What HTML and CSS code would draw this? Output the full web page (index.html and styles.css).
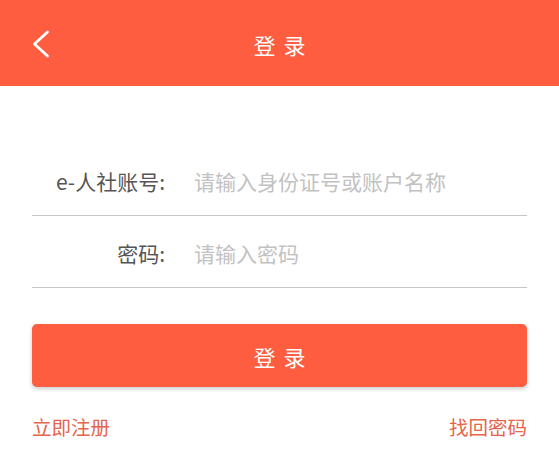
FILE: index.html
```html
<!DOCTYPE html>
<html lang="zh-CN">
<head>
<meta charset="utf-8">
<title>登录</title>
<link rel="stylesheet" href="styles.css">
</head>
<body>
<header class="topbar">
  <button class="back" aria-label="返回">
    <svg width="18" height="28" viewBox="0 0 18 28"><polyline points="15.5,2 2.5,14 15.5,26" fill="none" stroke="#fff" stroke-width="2.8" stroke-linecap="round" stroke-linejoin="round"/></svg>
  </button>
  <h1 class="title">登录</h1>
  <span></span>
</header>
<main class="form">
  <label class="field">
    <span class="label">e-人社账号:</span>
    <input class="input" type="text" placeholder="请输入身份证号或账户名称">
  </label>
  <label class="field">
    <span class="label">密码:</span>
    <input class="input" type="password" placeholder="请输入密码">
  </label>
  <button class="submit">登录</button>
  <div class="links">
    <a href="#">立即注册</a>
    <a href="#">找回密码</a>
  </div>
</main>
</body>
</html>
```
FILE: styles.css
```css
* { box-sizing: border-box; }
body {
  margin: 0;
  background: #fff;
  font-family: "Noto Sans CJK SC", "Noto Sans", sans-serif;
}
.topbar {
  height: 86px;
  background: #ff5d3f;
  display: grid;
  grid-template-columns: 1fr auto 1fr;
  align-items: center;
  padding: 2px 0 0 0;
}
.back {
  justify-self: start;
  margin-left: 32px;
  background: none;
  border: 0;
  padding: 0;
  display: flex;
}
.title {
  margin: 0;
  color: #fff;
  font-size: 22px;
  font-weight: 400;
  letter-spacing: 8px;
  margin-right: -8px;
  line-height: 1;
}
.form {
  padding: 58px 32px 0;
}
.field {
  display: flex;
  align-items: center;
  height: 72px;
  border-bottom: 1.5px solid #c6c6c6;
  padding-top: 2px;
}
.label {
  width: 133px;
  text-align: right;
  color: #555;
  font-size: 21px;
  flex: none;
}
.input {
  margin-left: 29px;
  border: 0;
  outline: 0;
  font: inherit;
  font-size: 21px;
  color: #333;
  flex: 1;
  min-width: 0;
  padding: 0;
  background: transparent;
}
.input::placeholder { color: #c2c2c2; }
.submit {
  display: block;
  width: 100%;
  height: 63px;
  margin-top: 36px;
  border: 0;
  border-radius: 5px;
  background: #ff5d3f;
  color: #fff;
  font: inherit;
  font-size: 22px;
  letter-spacing: 8px;
  text-indent: 8px;
  box-shadow: 0 2px 4px rgba(0,0,0,0.2);
}
.links {
  display: flex;
  justify-content: space-between;
  margin-top: 26px;
}
.links a {
  color: #e4654b;
  text-decoration: none;
  font-size: 19.5px;
  line-height: 28px;
}
```
